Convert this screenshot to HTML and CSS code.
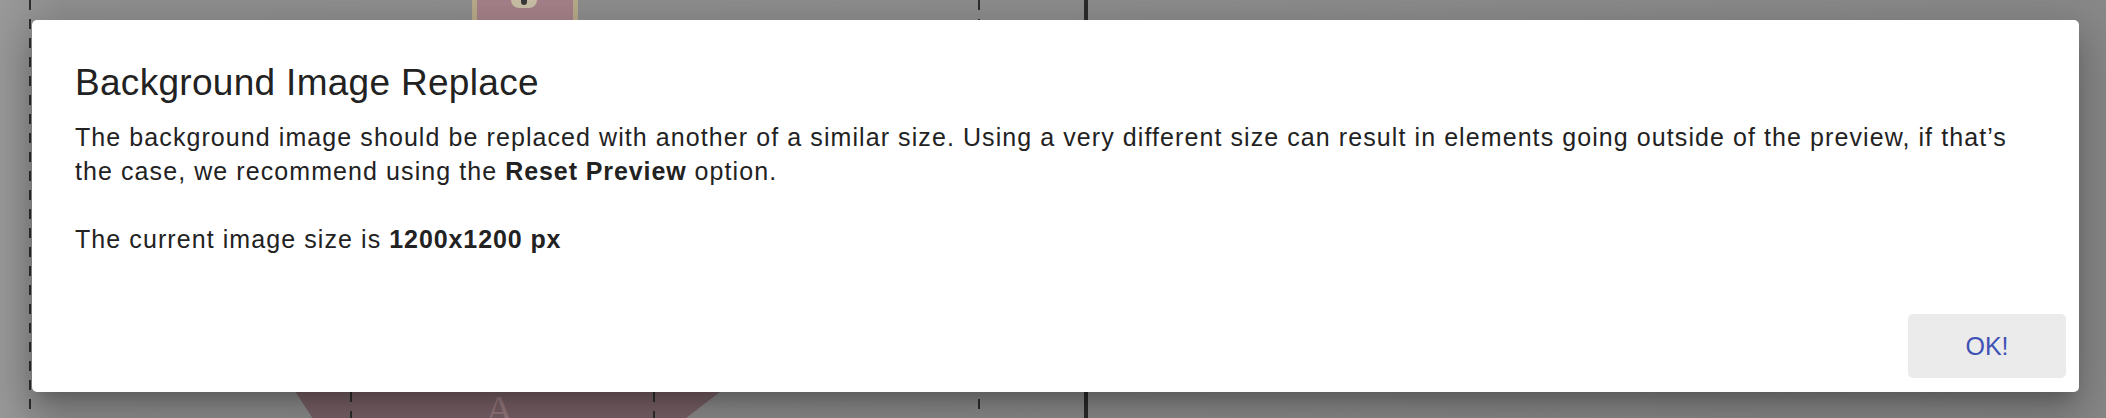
FILE: index.html
```html
<!DOCTYPE html>
<html>
<head>
    <title>Background Image Replace</title>
    <link rel="stylesheet" href="styles.css">
</head>
<body>
    <div class="stage">
        <!-- editor canvas behind the modal -->
        <div class="canvas">
            <div class="guide guide-left"></div>
            <div class="guide guide-mid"></div>
            <div class="edge-line"></div>
            <div class="charm-top"><span class="charm-clasp"></span></div>
            <div class="charm-bottom"><span class="charm-letter">A</span></div>
            <div class="guide guide-low guide-low-a"></div>
            <div class="guide guide-low guide-low-b"></div>
        </div>

        <div class="backdrop">
            <div class="dialog" role="dialog">
                <h2 class="dialog-title">Background Image Replace</h2>
                <div class="dialog-content">
                    <p>The background image should be replaced with another of a similar size. Using a very different size can result in elements going outside of the preview, if that’s the case, we recommend using the <b>Reset Preview</b> option.</p>
                    <p>The current image size is <b>1200x1200 px</b></p>
                </div>
                <div class="dialog-actions">
                    <button class="button ok">OK!</button>
                </div>
            </div>
        </div>
    </div>
</body>
</html>
```

FILE: styles.css
```css
body {
    margin: 0;
    font-family: "Liberation Sans", Arial, sans-serif;
    background-color: #8e8e8e;
}
.stage {
    position: relative;
    width: 2106px;
    height: 418px;
    overflow: hidden;
    background: linear-gradient(90deg, #999 0%, #8f8f8f 3%, #8c8c8c 60%, #888 100%);
}
.canvas {
    position: absolute;
    inset: 0;
    z-index: 0;
}
.guide {
    position: absolute;
    top: 0;
    bottom: 0;
    width: 2px;
    background: repeating-linear-gradient(180deg, #2e2e2e 0 10px, transparent 10px 19px);
}
.guide-left { left: 29px; }
.guide-mid { left: 978px; }
.guide-low { top: 392px; }
.guide-low-a { left: 350px; }
.guide-low-b { left: 653px; }
.edge-line {
    position: absolute;
    top: 0;
    bottom: 0;
    left: 1084px;
    width: 4px;
    background-color: #2b2b2b;
}
.charm-top {
    position: absolute;
    left: 472px;
    top: 0;
    width: 96px;
    height: 22px;
    border-left: 5px solid #b7ab8a;
    border-right: 5px solid #b7ab8a;
    background-color: #a58189;
}
.charm-clasp {
    position: absolute;
    left: 34px;
    top: 0;
    width: 26px;
    height: 8px;
    background-color: #c9c0a6;
    border-radius: 0 0 8px 8px;
}
.charm-clasp::after {
    content: "";
    position: absolute;
    left: 10px;
    top: 0;
    width: 6px;
    height: 5px;
    background-color: #3a3a3a;
    border-radius: 0 0 3px 3px;
}
.charm-bottom {
    position: absolute;
    left: 293px;
    top: 388px;
    width: 432px;
    height: 40px;
    background-color: #7a6268;
    clip-path: polygon(0 0, 100% 0, 88% 100%, 6% 100%);
}
.charm-letter {
    position: absolute;
    left: 192px;
    top: 2px;
    font-family: "Liberation Serif", serif;
    font-size: 40px;
    color: #9a7c82;
    line-height: 40px;
}
.backdrop {
    position: relative;
    z-index: 1;
    padding: 20px 27px 0 32px;
}
.dialog {
    width: 2047px;
    background-color: white;
    border-radius: 5px;
    box-shadow: 0 11px 15px -7px rgba(0, 0, 0, 0.2), 0 24px 38px 3px rgba(0, 0, 0, 0.14), 0 9px 46px 8px rgba(0, 0, 0, 0.12);
}
.dialog-title {
    margin: 0;
    padding: 42px 43px 0;
    font-size: 37px;
    font-weight: normal;
    letter-spacing: 0.3px;
    color: #222;
    line-height: 42px;
}
.dialog-content {
    padding: 16px 30px 0 43px;
    font-size: 25px;
    letter-spacing: 1.08px;
    line-height: 34px;
    color: #222;
}
.dialog-content b {
    letter-spacing: 0.9px;
}
.dialog-content p {
    margin: 0 0 34px;
}
.dialog-content p:last-child {
    margin-bottom: 0;
}
.dialog-actions {
    display: flex;
    justify-content: flex-end;
    padding: 58px 13px 14px;
}
.button {
    width: 158px;
    height: 64px;
    font-family: "Liberation Sans", Arial, sans-serif;
    font-size: 25px;
    border: none;
    border-radius: 5px;
    cursor: pointer;
}
.ok {
    background-color: #ebebeb;
    color: #3f51b5;
}
```
